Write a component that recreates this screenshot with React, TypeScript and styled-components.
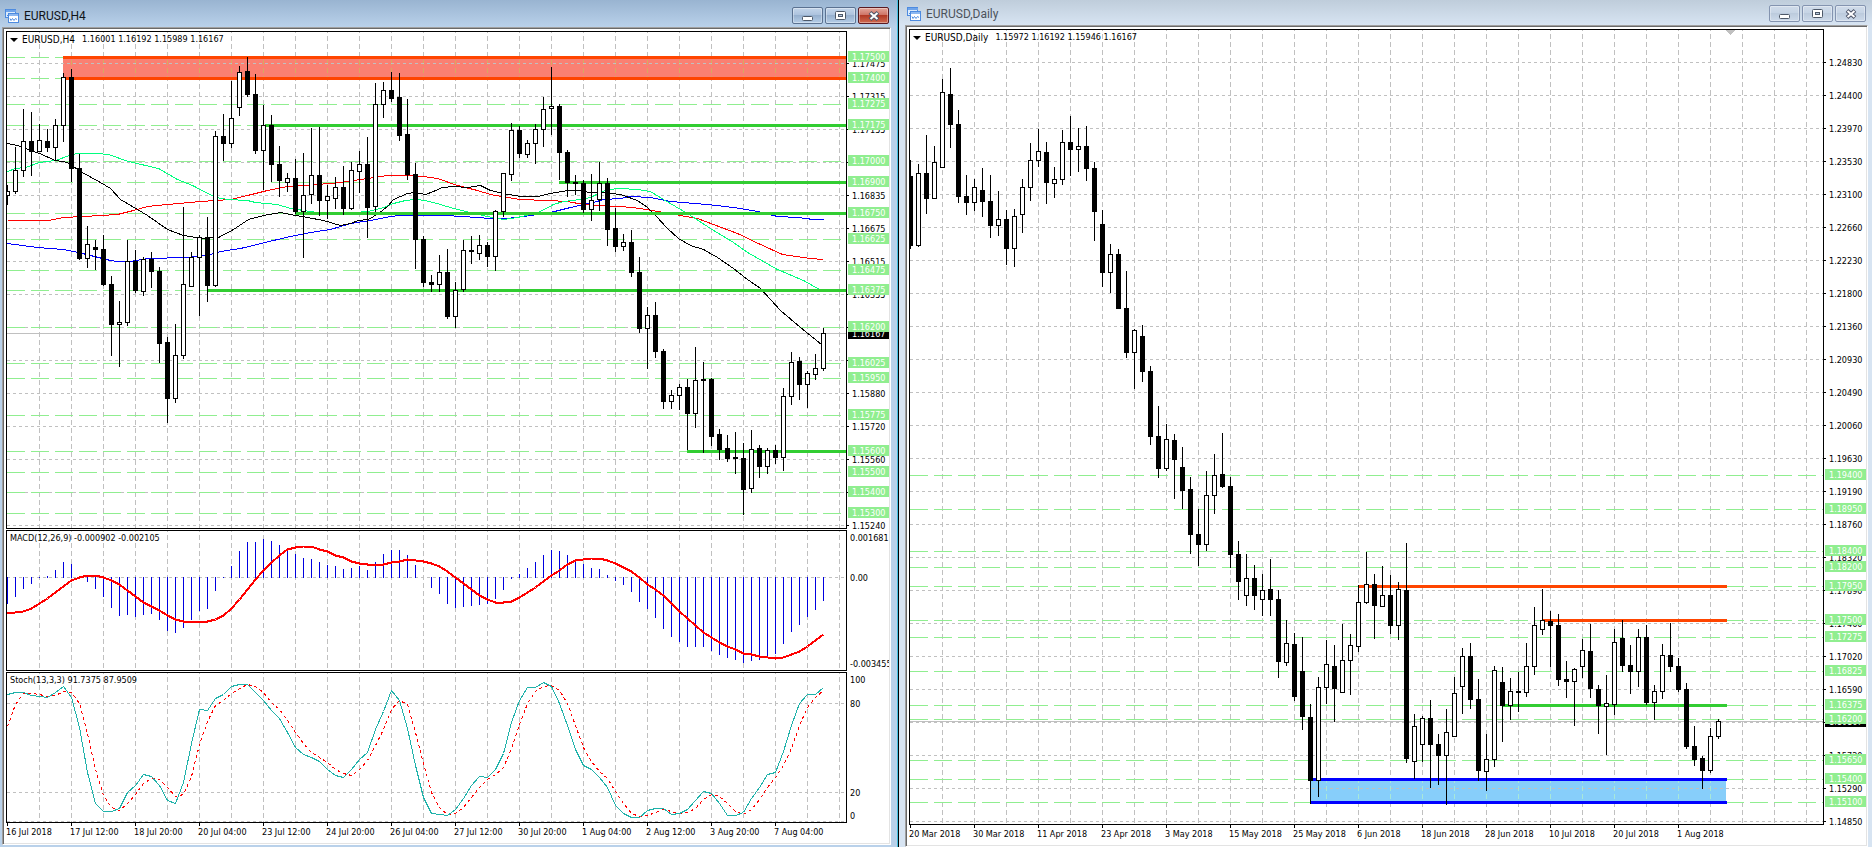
import React from "react";
import styled, { createGlobalStyle } from "styled-components";

const GlobalStyle = createGlobalStyle`
  *, *::before, *::after { box-sizing: border-box; }
  body { margin: 0; background: #d7e4f2; }
`;

const CHART_FONT = '"DejaVu Sans Condensed", "Noto Sans", sans-serif';

/* ------------------------------------------------------------------ */
/* Window chrome                                                       */
/* ------------------------------------------------------------------ */

const Desktop = styled.main`
  display: grid;
  grid-template-columns: 899fr 973fr;
  min-height: 100vh;
`;

const WindowFrame = styled.section<{ $active: boolean }>`
  display: flex;
  flex-direction: column;
  min-width: 0;
  overflow: hidden;
  font-family: Roboto, sans-serif;
  background: ${(p) => (p.$active ? "#b9d1ea" : "#d7e4f2")};
  padding: ${(p) => (p.$active ? "0 7px 2px 2px" : "0 4px 0 6px")};
  border-right: ${(p) => (p.$active ? "1px solid #000" : "none")};
  box-shadow: ${(p) => (p.$active ? "inset -1px 0 #43bfe0" : "none")};
  background-image: ${(p) =>
    p.$active
      ? "linear-gradient(#99b4d1, #b9d1ea 27px)"
      : "linear-gradient(#bfcddb, #d7e4f2 25px)"};
`;

const TitleBar = styled.header<{ $active: boolean }>`
  display: flex;
  align-items: center;
  flex: none;
  height: ${(p) => (p.$active ? "27px" : "25px")};
  padding: ${(p) => (p.$active ? "4px 2px 0 3px" : "2px 2px 0 2px")};
`;

const WindowTitle = styled.h2<{ $active: boolean }>`
  flex: 1;
  margin: 0 0 0 5px;
  font-size: 12px;
  line-height: 16px;
  font-weight: 400;
  color: ${(p) => (p.$active ? "#101418" : "#4c535c")};
`;

const ButtonGroup = styled.div`
  display: flex;
  gap: 2px;
`;

const CaptionButton = styled.button<{ $tone: "active" | "idle" | "close" }>`
  display: flex;
  align-items: center;
  justify-content: center;
  width: 31px;
  height: 17px;
  padding: 0;
  border-radius: 2px;
  border: 1px solid ${(p) => (p.$tone === "close" ? "#5a1a22" : p.$tone === "active" ? "#5b7291" : "#8494b0")};
  background: ${(p) =>
    p.$tone === "close"
      ? "linear-gradient(#e3a79c 0%, #cf7567 45%, #b23a26 50%, #cf6a50 100%)"
      : p.$tone === "active"
        ? "linear-gradient(#c3d5ea 0%, #adc3de 45%, #97b1cf 50%, #b5cde7 100%)"
        : "linear-gradient(#d0dcea 0%, #c6d4e5 45%, #bccbdd 50%, #cddaea 100%)"};
  box-shadow: inset 0 0 0 1px rgba(255, 255, 255, 0.35);
`;

const ClientArea = styled.div`
  display: flex;
  flex-direction: column;
  flex: 1;
  gap: 1px;
  background: #fff;
  border: 1px solid;
  border-color: #a0a0a0 #fff #fff #a0a0a0;
  padding: 3px 1px 1px 3px;
  box-shadow: inset 1px 1px #696969, inset -1px -1px #e3e3e3;
`;

const PanelRow = styled.div`
  display: flex;
`;

const PlotBox = styled.div`
  position: relative;
  flex: 1;
  min-width: 0;
  border: 1px solid #000;
`;

const Drawing = styled.svg<{ $height: number }>`
  display: block;
  width: 100%;
  height: ${(p) => p.$height}px;
  font-family: ${CHART_FONT};
  font-size: 9px;
`;

const PriceAxis = styled.div`
  flex: none;
  width: 42px;
`;

const TimeAxis = styled.div`
  margin-top: -2px;
`;

const Caption = styled.div`
  position: absolute;
  top: 0;
  left: 3px;
  display: flex;
  align-items: baseline;
  gap: 7px;
  white-space: pre;
  font-family: ${CHART_FONT};
  font-size: 9px;
  line-height: 14px;
  color: #000;
`;

const SymbolName = styled.span`
  display: flex;
  align-items: center;
  gap: 4px;
  font-size: 10px;
`;

const MenuArrow = styled.span`
  border: 4px solid transparent;
  border-top-color: #000;
  border-bottom: 0;
`;

const WindowIcon = () => (
  <svg width="14" height="14" viewBox="0 0 14 14" shapeRendering="crispEdges" aria-hidden="true">
    <rect x="0.5" y="0.5" width="10" height="8" fill="#dcebfb" stroke="#4d8be0" />
    <rect x="1" y="1" width="10" height="2" fill="#6fa4ea" />
    <path d="M2 6h1M3 5h1M4 4h1M5 5h1M6 4h1" stroke="#4d8be0" />
    <rect x="3.5" y="4.5" width="10" height="9" rx="1" fill="#fff" stroke="#4d8be0" />
    <rect x="4" y="5" width="9" height="2" fill="#8db8f0" />
    <path d="M5 9.5l1 2 1.500-2 1.500 2 1.500-2 1.500 1" fill="none" stroke="#4d8be0" shapeRendering="auto" />
  </svg>
);

const MinimizeGlyph = () => (
  <svg width="12" height="10" viewBox="0 0 12 10" aria-hidden="true">
    <rect x="0.5" y="5.500" width="10" height="4" rx="1" fill="#fff" stroke="#4d5868" />
  </svg>
);
const RestoreGlyph = () => (
  <svg width="11" height="9" viewBox="0 0 11 9" aria-hidden="true">
    <rect x="0.5" y="0.5" width="10" height="8" rx="1" fill="#fff" stroke="#4d5868" />
    <rect x="3.5" y="3.500" width="4" height="2" fill="#b7c9de" stroke="#4d5868" />
  </svg>
);
const CloseGlyph = () => (
  <svg width="12" height="10" viewBox="0 0 12 10" aria-hidden="true">
    <path d="M2 1.500L10 8.500M10 1.500L2 8.500" stroke="#4d5468" strokeWidth="4" />
    <path d="M2.500 2L9.500 8M9.500 2L2.500 8" stroke="#fff" strokeWidth="2" />
  </svg>
);

/* ------------------------------------------------------------------ */
/* Data. Vertical values are rows of the window, columns are 8px wide. */
/* Candle: high, low, body top, body bottom, 1 = falling               */
/* ------------------------------------------------------------------ */

type Candle = [number, number, number, number, number];

const H4: Candle[] = [
  [185,205,191,196,0],[147,194,170,192,0],[109,177,141,171,0],[112,176,141,152,1],[124,152,140,152,0],
  [129,152,141,148,1],[119,161,125,148,0],[73,142,77,126,0],[69,182,77,169,1],[154,260,168,259,1],
  [226,268,244,259,0],[240,270,247,250,1],[235,286,249,285,1],[276,356,284,325,1],[301,367,322,325,0],
  [240,326,261,323,0],[250,293,261,291,1],[257,296,259,292,0],[252,288,259,272,1],[267,363,271,344,1],
  [337,423,342,399,1],[324,403,355,399,0],[207,359,284,356,0],[252,287,257,287,0],[235,316,237,258,0],
  [217,302,237,286,1],[131,287,136,286,0],[114,161,136,144,1],[81,148,118,144,0],[66,116,72,108,0],
  [57,97,71,95,1],[74,154,94,151,1],[105,190,125,151,0],[115,182,125,165,1],[146,197,164,181,1],
  [173,192,178,183,0],[159,214,178,212,1],[153,258,195,212,0],[128,204,175,195,0],[127,216,175,201,1],
  [185,219,196,201,0],[177,209,187,199,0],[166,215,187,209,1],[162,210,170,209,0],[151,193,164,172,0],
  [137,238,164,208,1],[83,212,104,207,0],[82,118,90,105,0],[72,102,90,99,1],[73,141,97,136,1],
  [99,180,134,175,1],[163,269,174,240,1],[236,287,239,283,1],[275,292,282,285,1],[255,292,272,285,0],
  [249,319,272,317,1],[282,328,290,317,0],[240,292,250,290,0],[236,264,250,252,1],[235,260,245,254,0],
  [242,267,245,257,1],[210,271,211,257,0],[173,217,173,212,0],[123,181,130,175,0],[126,158,130,154,1],
  [140,158,143,155,0],[124,164,129,144,0],[97,147,109,130,0],[67,135,106,109,0],[104,180,106,153,1],
  [150,197,152,183,1],[175,195,182,184,1],[180,213,183,210,1],[174,221,200,210,0],[162,211,183,200,0],
  [178,246,183,230,1],[208,252,228,247,1],[234,251,242,247,0],[230,277,242,273,1],[257,333,272,329,1],
  [307,369,315,329,0],[302,358,315,352,1],[349,409,351,402,1],[390,409,395,402,0],[384,410,387,396,0],
  [379,450,387,414,1],[347,428,380,414,0],[362,453,379,381,1],[378,446,379,437,1],[429,460,434,450,1],
  [435,462,448,459,1],[432,474,457,459,1],[443,515,458,490,1],[430,493,449,489,0],[445,478,448,467,1],
  [448,474,450,467,0],[445,464,450,458,1],[388,471,396,458,0],[352,405,362,397,0],[357,400,361,385,1],
  [371,408,373,385,0],[354,380,368,375,0],[328,371,333,369,0],
];

const DAILY: Candle[] = [
  [160,249,176,246,1],[164,247,173,246,0],[135,214,173,199,1],[146,199,162,199,0],[79,168,92,168,0],
  [68,148,94,125,1],[110,203,124,197,1],[175,215,196,203,1],[179,211,187,203,0],[168,217,190,202,1],
  [175,238,201,226,1],[191,236,219,226,0],[210,265,219,249,1],[209,267,216,249,0],[179,233,187,215,0],
  [143,201,160,188,0],[129,167,151,161,0],[142,204,152,183,1],[167,198,179,184,0],[130,185,142,180,0],
  [116,176,142,150,1],[128,172,146,150,0],[126,181,146,169,1],[162,241,168,212,1],[210,287,224,273,1],
  [244,293,254,273,0],[249,309,254,309,1],[271,358,308,353,1],[329,389,330,353,0],[325,382,336,372,1],
  [366,445,371,437,1],[406,478,436,469,1],[424,471,439,469,0],[434,499,440,460,1],[447,509,467,491,1],
  [477,554,489,535,1],[509,566,534,545,1],[471,551,495,545,0],[454,514,475,496,0],[433,488,474,487,1],
  [477,568,486,555,1],[541,600,554,582,1],[554,606,578,596,0],[565,610,578,596,1],[574,616,590,600,0],
  [559,616,589,600,1],[590,678,599,662,1],[620,666,643,663,0],[633,701,644,697,1],[637,730,671,717,1],
  [704,804,717,781,1],[677,797,687,781,0],[640,704,664,688,0],[645,722,666,689,1],[624,693,660,693,0],
  [634,695,645,661,0],[585,652,602,647,0],[552,604,584,603,0],[574,639,584,606,1],[566,607,595,607,0],
  [575,634,595,626,1],[582,640,589,626,0],[543,763,590,759,1],[714,779,726,762,0],[716,762,718,745,0],
  [700,788,718,745,1],[734,785,744,756,1],[709,805,732,756,0],[677,737,693,737,0],[648,714,656,687,0],
  [643,709,656,700,1],[679,781,699,771,1],[734,791,759,772,0],[666,767,670,760,0],[667,742,682,706,1],
  [678,720,691,706,0],[672,712,691,693,1],[643,697,666,693,0],[607,675,625,667,0],[589,635,620,630,0],
  [611,667,621,626,1],[614,686,625,680,1],[661,698,679,682,1],[668,726,669,682,0],[639,678,650,667,0],
  [624,698,651,689,1],[685,734,689,706,1],[675,755,703,707,0],[629,715,642,705,0],[620,672,638,666,1],
  [645,694,665,672,1],[629,687,637,672,0],[625,705,637,703,1],[685,720,691,703,0],[644,699,655,692,0],
  [623,672,655,667,1],[658,692,666,690,1],[683,749,689,747,1],[726,766,746,760,1],[756,789,758,771,1],
  [728,773,736,771,0],[719,739,721,737,0],
];

const AVERAGES: { color: string; points: string }[] = [
  { color: "#0000ff", points: "7,243 37,247 63,249 78,252 90,255 110,260 117,261 130,261 147,258 187,257 207,255 220,251 240,248 273,240 290,236 310,232 330,229 350,223 370,220 390,216 400,215 443,215 463,216 490,218 507,218 530,215 550,212 570,207 593,202 603,199 620,198 630,196 650,197 670,201 707,204 733,207 757,211 777,216 797,217 813,219 823,219" },
  { color: "#ff0000", points: "7,220 27,220 48,220 63,217 83,216 117,214 133,210 147,206 167,204 200,201 230,199 247,195 267,190 287,186 317,184 340,182 360,179 387,175 410,175 423,176 437,178 457,185 477,190 490,194 507,197 520,199 547,200 567,201 583,204 597,205 620,206 640,208 663,212 680,215 697,218 713,224 737,233 760,244 782,254 810,258 823,259" },
  { color: "#00ff7f", points: "7,171 15,168 25,167 39,162 55,160 72,154 78,153 97,153 108,154 128,161 158,168 177,179 192,185 215,197 227,199 247,200 255,202 277,204 290,208 310,211 323,213 353,212 368,211 383,207 393,203 405,200 415,199 425,200 440,204 453,208 470,212 487,216 503,219 517,217 538,212 553,204 563,201 580,199 590,197 600,192 607,189 620,188 637,189 650,191 663,199 687,213 710,228 733,242 747,252 777,269 803,280 819,289" },
  { color: "#000000", points: "7,143 17,145 25,148 39,153 55,160 67,162 80,171 100,182 110,188 120,199 137,209 147,215 167,229 183,235 202,238 218,237 233,229 248,219 263,215 280,212 290,214 307,217 323,220 340,225 350,223 358,220 368,219 378,213 387,206 393,199 407,193 415,192 425,194 433,191 442,187 453,186 467,187 480,185 490,190 503,193 520,196 537,196 550,193 567,190 577,190 590,192 600,192 620,194 637,200 647,207 655,215 667,228 678,238 690,245 703,249 717,257 733,268 747,279 760,288 780,310 800,327 821,344" },
];

const MACD_BARS = [
  604,597,589,584,578,576,570,562,564,578,582,589,597,608,616,615,617,615,614,620,631,633,628,620,611,609,
  591,578,566,551,542,542,539,541,545,550,554,558,559,562,565,566,569,568,566,570,562,554,550,550,555,565,
  577,588,594,604,608,607,606,605,604,599,590,579,574,568,562,555,550,551,555,561,564,568,569,575,581,585,
  592,602,609,618,629,637,642,647,647,647,651,655,658,660,663,661,660,657,654,644,632,625,617,610,601,
];
const MACD_SIGNAL = [
  613,612,611,608,603,598,592,586,580,577,575,575,577,580,584,590,596,602,606,610,615,619,621,621,621,621,
  619,615,608,599,589,579,570,562,555,549,547,546,546,549,551,555,557,561,563,564,564,564,562,561,559,560,
  561,563,566,571,577,583,589,595,599,602,602,601,597,592,587,581,575,570,564,560,559,558,558,560,563,567,
  571,577,584,589,595,603,611,618,625,632,637,642,646,649,653,654,656,657,658,657,654,651,646,640,634,
];
const STOCH_MAIN = [
  694,692,692,695,696,697,692,686,697,727,772,803,811,811,808,792,785,774,776,785,800,803,782,743,709,710,
  698,694,686,684,684,692,700,710,718,732,747,754,757,761,769,775,777,769,759,752,729,711,690,700,728,765,
  797,813,814,815,809,798,785,776,777,769,753,722,700,687,687,682,686,703,725,749,765,769,777,787,805,813,
  817,817,810,808,808,814,813,809,800,791,793,803,815,815,812,798,787,774,772,751,725,703,694,694,687,
];
const STOCH_SIGNAL = [
  726,704,693,693,694,696,695,691,692,703,733,769,795,807,810,803,794,783,778,779,787,796,794,776,744,721,
  705,700,693,688,684,686,692,702,709,720,732,743,752,757,762,769,773,775,769,760,745,729,709,700,704,732,
  763,792,807,814,813,807,797,787,779,774,767,748,724,703,691,686,685,690,703,725,747,761,771,778,791,803,
  813,816,815,812,809,811,813,812,808,799,794,796,803,811,814,809,799,787,777,765,748,725,707,697,690,
];

type Level = [string, number];

const H4_LEVELS: Level[] = [
  ["1.17500",57],["1.17400",78],["1.17275",104],["1.17175",125],["1.17000",161],["1.16900",182],
  ["1.16750",213],["1.16625",239],["1.16475",270],["1.16375",290],["1.16200",327],["1.16025",363],
  ["1.15950",378],["1.15775",415],["1.15600",451],["1.15500",472],["1.15400",492],["1.15300",513],
];
const H4_SCALE = [
  "1.17475","1.17315","1.17155","1.16995","1.16835","1.16675","1.16515","1.16355","1.16195","1.16035",
  "1.15880","1.15720","1.15560","1.15400","1.15240",
];
const DAILY_LEVELS: Level[] = [
  ["1.19400",475],["1.18950",509],["1.18400",551],["1.18200",567],["1.17950",586],["1.17500",620],
  ["1.17275",637],["1.16825",671],["1.16375",705],["1.16200",719],["1.15650",760],["1.15400",779],["1.15100",802],
];
const DAILY_SCALE = [
  "1.24830","1.24400","1.23970","1.23530","1.23100","1.22660","1.22230","1.21800","1.21360","1.20930",
  "1.20490","1.20060","1.19630","1.19190","1.18760","1.18320","1.17890","1.17460","1.17020","1.16590",
  "1.16150","1.15720","1.15290","1.14850",
];
const H4_TIMES = [
  "16 Jul 2018","17 Jul 12:00","18 Jul 20:00","20 Jul 04:00","23 Jul 12:00","24 Jul 20:00","26 Jul 04:00",
  "27 Jul 12:00","30 Jul 20:00","1 Aug 04:00","2 Aug 12:00","3 Aug 20:00","7 Aug 04:00",
];
const DAILY_TIMES = [
  "20 Mar 2018","30 Mar 2018","11 Apr 2018","23 Apr 2018","3 May 2018","15 May 2018","25 May 2018",
  "6 Jun 2018","18 Jun 2018","28 Jun 2018","10 Jul 2018","20 Jul 2018","1 Aug 2018",
];

/* ------------------------------------------------------------------ */
/* Chart pieces                                                        */
/* ------------------------------------------------------------------ */

const range = (n: number) => Array.from({ length: n }, (_, i) => i);
const STEP = 8;
const GRID = "#c0c0c0";

interface PlotProps {
  top: number;
  height: number;
  children: React.ReactNode;
}
const Plot = ({ top, height, children }: PlotProps) => (
  <Drawing $height={height} shapeRendering="crispEdges">
    <g transform={`translate(0 ${-top})`}>{children}</g>
  </Drawing>
);

const HLine = ({ y, color = GRID, dash = "3 3" }: { y: number; color?: string; dash?: string }) => (
  <line x1="0" x2="100%" y1={y + 0.5} y2={y + 0.5} stroke={color} strokeDasharray={dash} />
);

interface VGridProps {
  top: number;
  bottom: number;
  count: number;
  from?: number;
  color?: string;
  phase?: number;
}
const VGrid = ({ top, bottom, count, from = 0, color = GRID, phase = 4 }: VGridProps) => (
  <path
    d={range(count).slice(from).map((i) => `M${32 + i * 32 + 0.5} ${top}V${bottom}`).join("")}
    stroke={color}
    strokeDasharray="5 3"
    strokeDashoffset={phase}
  />
);

const Candles = ({ data }: { data: Candle[] }) => (
  <>
    {data.map(([hi, lo, top, bottom, falling], i) => (
      <g key={i}>
        <rect x={i * STEP} y={hi} width="1" height={lo - hi} />
        <rect x={i * STEP - 2} y={top} width="5" height={bottom - top} />
        {!falling && <rect x={i * STEP - 1} y={top + 1} width="3" height={bottom - top - 2} fill="#fff" />}
      </g>
    ))}
  </>
);

interface RayProps {
  y: number;
  from: number;
  to?: number;
  color: string;
}
const Ray = ({ y, from, to, color }: RayProps) => (
  <line x1={from} x2={to ?? "100%"} y1={y + 0.5} y2={y + 0.5} stroke={color} strokeWidth="3" />
);

const Series = ({ rows, ...rest }: { rows: number[] } & React.SVGProps<SVGPolylineElement>) => (
  <polyline points={rows.map((y, i) => `${i * STEP + 0.5},${y + 0.5}`).join(" ")} fill="none" {...rest} />
);

interface ScaleProps {
  top: number;
  height: number;
  first: number;
  labels: string[];
  levels: Level[];
  price: Level;
}
const Scale = ({ top, height, first, labels, levels, price }: ScaleProps) => (
  <PriceAxis>
    <Drawing $height={height + 2}>
      <g transform={`translate(0 ${1 - top})`}>
        {labels.map((t, i) => (
          <g key={t}>
            <rect x="0" y={first + i * 33} width="2" height="1" />
            <text x="5" y={first + i * 33 + 4}>{t}</text>
          </g>
        ))}
        <rect x="1" y={price[1] - 5} width="41" height="11" />
        <text x="5" y={price[1] + 4} fill="#fff">{price[0]}</text>
        {levels.map(([t, y]) => (
          <g key={t}>
            <rect x="1" y={y - 6} width="41" height="11" fill="#90ee90" />
            <text x="5" y={y + 3} fill="#fff">{t}</text>
          </g>
        ))}
      </g>
    </Drawing>
  </PriceAxis>
);

const SmallScale = ({ top, height, labels }: { top: number; height: number; labels: Level[] }) => (
  <PriceAxis>
    <Drawing $height={height + 2}>
      <g transform={`translate(0 ${1 - top})`}>
        {labels.map(([t, y]) => (
          <text key={t} x="3" y={y + 4}>{t}</text>
        ))}
      </g>
    </Drawing>
  </PriceAxis>
);

const Times = ({ labels }: { labels: string[] }) => (
  <TimeAxis>
    <Drawing $height={20}>
      {labels.map((t, i) => (
        <g key={t}>
          <rect x={i * 64 + 1} y="0" width="1" height="4" />
          <text x={i * 64} y="13">{t}</text>
        </g>
      ))}
    </Drawing>
  </TimeAxis>
);

interface ChartWindowProps {
  title: string;
  active: boolean;
  children: React.ReactNode;
}
const ChartWindow = ({ title, active, children }: ChartWindowProps) => {
  const tone = active ? "active" : "idle";
  return (
    <WindowFrame $active={active}>
      <TitleBar $active={active}>
        <WindowIcon />
        <WindowTitle $active={active}>{title}</WindowTitle>
        <ButtonGroup>
          <CaptionButton $tone={tone} aria-label="Minimize"><MinimizeGlyph /></CaptionButton>
          <CaptionButton $tone={tone} aria-label="Restore"><RestoreGlyph /></CaptionButton>
          <CaptionButton $tone={active ? "close" : "idle"} aria-label="Close"><CloseGlyph /></CaptionButton>
        </ButtonGroup>
      </TitleBar>
      <ClientArea>{children}</ClientArea>
    </WindowFrame>
  );
};

const H4Chart = () => (
  <ChartWindow title="EURUSD,H4" active>
    <PanelRow>
      <PlotBox>
        <Plot top={32} height={496}>
          <rect x="56" y="59" width="100%" height="18" fill="#fa8072" />
          <VGrid top={32} bottom={528} count={26} />
          <VGrid top={59} bottom={77} count={26} from={1} color="#d8a860" phase={7} />
          {H4_SCALE.map((_, i) => <HLine key={i} y={63 + i * 33} />)}
          {H4_LEVELS.map(([t, y]) => <HLine key={t} y={y} color="#90ee90" dash="18 6" />)}
          <HLine y={333} dash="none" />
          {AVERAGES.map((a) => (
            <polyline key={a.color} points={a.points} fill="none" stroke={a.color} transform="translate(-6.500 0.500)" />
          ))}
          <Ray y={57} from={56} color="#ff4500" />
          <Ray y={78} from={56} color="#ff4500" />
          <Ray y={125} from={258} color="#32cd32" />
          <Ray y={182} from={552} color="#32cd32" />
          <Ray y={213} from={288} color="#32cd32" />
          <Ray y={290} from={200} color="#32cd32" />
          <Ray y={451} from={680} color="#32cd32" />
          <Candles data={H4} />
        </Plot>
        <Caption>
          <SymbolName><MenuArrow />EURUSD,H4</SymbolName>
          1.16001 1.16192 1.15989 1.16167
        </Caption>
      </PlotBox>
      <Scale top={32} height={496} first={63} labels={H4_SCALE} levels={H4_LEVELS} price={["1.16167", 333]} />
    </PanelRow>
    <PanelRow>
      <PlotBox>
        <Plot top={531} height={139}>
          <VGrid top={531} bottom={670} count={26} />
          <HLine y={577} />
          {MACD_BARS.map((y, i) => (
            <rect key={i} x={i * STEP} y={Math.min(y, 577)} width="1" height={Math.abs(y - 577) + (y < 577 ? 1 : 0)} fill="#0000e0" />
          ))}
          <Series rows={MACD_SIGNAL} stroke="#ff0000" strokeWidth="2" />
        </Plot>
        <Caption>MACD(12,26,9) -0.000902 -0.002105</Caption>
      </PlotBox>
      <SmallScale top={531} height={139} labels={[["0.001681", 537], ["0.00", 577], ["-0.003455", 663]]} />
    </PanelRow>
    <PanelRow>
      <PlotBox>
        <Plot top={673} height={149}>
          <VGrid top={673} bottom={822} count={26} />
          <HLine y={703} />
          <HLine y={792} />
          <HLine y={821} />
          <Series rows={STOCH_SIGNAL} stroke="#ff0000" strokeDasharray="3 3" />
          <Series rows={STOCH_MAIN} stroke="#20b2aa" />
        </Plot>
        <Caption>Stoch(13,3,3) 91.7375 87.9509</Caption>
      </PlotBox>
      <SmallScale top={673} height={149} labels={[["100", 679], ["80", 703], ["20", 792], ["0", 815]]} />
    </PanelRow>
    <Times labels={H4_TIMES} />
  </ChartWindow>
);

const DailyChart = () => (
  <ChartWindow title="EURUSD,Daily" active={false}>
    <PanelRow>
      <PlotBox>
        <Plot top={30} height={794}>
          <rect x="401" y="780" width="415" height="22" fill="#87cefa" />
          <VGrid top={30} bottom={824} count={28} />
          {DAILY_SCALE.map((_, i) => <HLine key={i} y={62 + i * 33} />)}
          {DAILY_LEVELS.map(([t, y]) => <HLine key={t} y={y} color="#90ee90" dash="18 6" />)}
          <HLine y={721} dash="none" />
          <VGrid top={780} bottom={802} count={25} from={12} color="#a8e8d8" phase={2} />
          <Ray y={586} from={448} to={817} color="#ff4500" />
          <Ray y={620} from={633} to={817} color="#ff4500" />
          <Ray y={705} from={593} to={817} color="#32cd32" />
          <Ray y={779} from={401} to={817} color="#0000ff" />
          <Ray y={802} from={401} to={817} color="#0000ff" />
          <Candles data={DAILY} />
          <path d="M816 30h9l-4.500 5z" fill={GRID} />
        </Plot>
        <Caption>
          <SymbolName><MenuArrow />EURUSD,Daily</SymbolName>
          1.15972 1.16192 1.15946 1.16167
        </Caption>
      </PlotBox>
      <Scale top={30} height={794} first={62} labels={DAILY_SCALE} levels={DAILY_LEVELS} price={["1.16167", 721]} />
    </PanelRow>
    <Times labels={DAILY_TIMES} />
  </ChartWindow>
);

export default function App() {
  return (
    <>
      <GlobalStyle />
      <Desktop>
        <H4Chart />
        <DailyChart />
      </Desktop>
    </>
  );
}
